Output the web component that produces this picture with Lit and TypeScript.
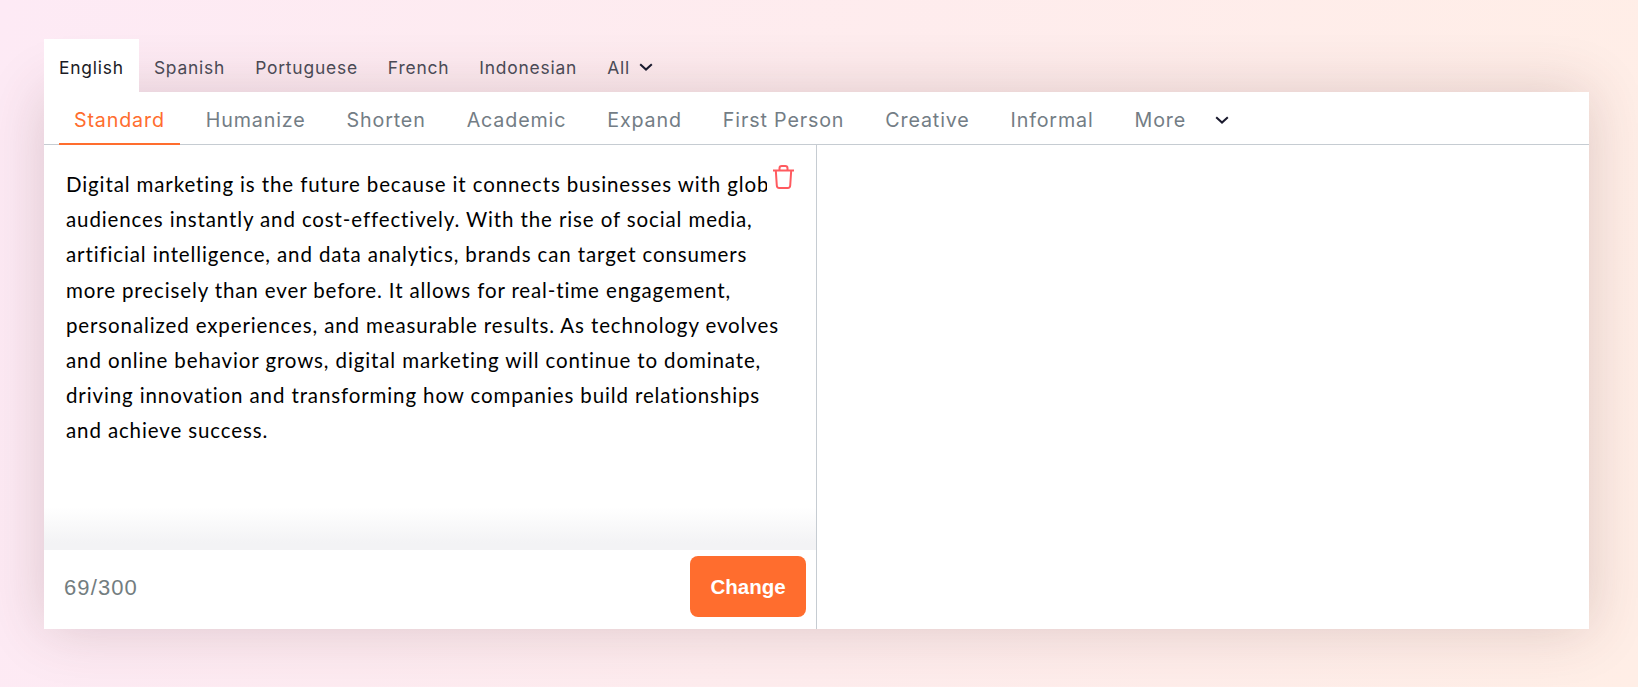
import { LitElement, html, css } from "lit";
import { customElement } from "lit/decorators.js";

const langs = ["Spanish", "Portuguese", "French", "Indonesian"];
const modes = ["Humanize", "Shorten", "Academic", "Expand", "First Person", "Creative", "Informal"];
const text = "Digital marketing is the future because it connects businesses with global audiences instantly and cost-effectively. With the rise of social media, artificial intelligence, and data analytics, brands can target consumers more precisely than ever before. It allows for real-time engagement, personalized experiences, and measurable results. As technology evolves and online behavior grows, digital marketing will continue to dominate, driving innovation and transforming how companies build relationships and achieve success.";

const chevron = html`<svg class="chev" viewBox="0 0 14 8" width="14" height="8"><path d="M1.2 1.2 7 6.6l5.8-5.4" fill="none" stroke="#1a1a2e" stroke-width="2"/></svg>`;

@customElement("app-root")
export class AppRoot extends LitElement {
  static styles = css`
    :host { display: block; width: 1638px; height: 687px; overflow: hidden;
      background: linear-gradient(100deg, #fdeaf5 0%, #ffeee6 100%); box-sizing: border-box; padding: 39px 49px 0 44px; font-family: Inter, sans-serif; }
    .langs { position: relative; z-index: 1; display: flex; height: 53px; align-items: stretch; font-size: 17.4px; letter-spacing: 0.8px; color: #4a4a55; }
    .lang { padding: 3px 15px 0; display: flex; align-items: center; }
    .lang.active { background: #fff; color: #1b1b25; }
    .lang .chev { margin-left: 9px; }
    .card { background: #fff; height: 537px; display: flex; flex-direction: column; box-shadow: 0 0 55px rgba(90, 50, 50, 0.2); }
    .modes { display: flex; height: 52px; border-bottom: 1px solid #c6ccd2; padding-left: 15px; font-size: 19.7px; letter-spacing: 0.84px; color: #737d85; box-sizing: content-box; }
    .mode { padding: 5px 15px 0; margin-right: 11px; display: flex; align-items: center; margin-bottom: -1px; border-bottom: 2px solid transparent; box-sizing: border-box; height: 53px; }
    .mode.active { color: #ff6d2e; border-bottom-color: #ff6d2e; }
    .mode.more { margin-right: 0; }
    .mode .chev { margin-left: 29px; }
    .panes { flex: 1; display: flex; min-height: 0; }
    .left { width: 772px; border-right: 1px solid #c6ccd2; display: flex; flex-direction: column; position: relative; }
    .editor { flex: 1; padding: 22px 29px 0 22px; overflow: hidden; font-family: Lato, sans-serif; font-size: 20.5px; line-height: 35.2px; letter-spacing: 0.88px; color: #000; background: linear-gradient(to bottom, #fff 0, #fff 362px, #f3f3f5 398px); }
    .trash { position: absolute; top: 19px; left: 723px; width: 30px; height: 32px; background: #fff; padding: 1px 0 0 6px; box-sizing: border-box; }
    .trash svg { display: block; }
    .foot { height: 79px; display: flex; align-items: center; justify-content: space-between; padding: 0 10px 0 20px; box-sizing: border-box; }
    .count { font-family: "Liberation Sans", sans-serif; font-size: 22px; letter-spacing: 1.1px; color: #737d80; padding-bottom: 4px; }
    .btn { width: 116px; height: 61px; margin-bottom: 6px; border: 0; border-radius: 8px; background: #ff6d2e; color: #fff; font-family: "Liberation Sans", sans-serif; font-weight: 700; font-size: 20.5px; }
    .right { flex: 1; }
  `;

  render() {
    return html`
      <div class="langs">
        <div class="lang active">English</div>
        ${langs.map((l) => html`<div class="lang">${l}</div>`)}
        <div class="lang">All${chevron}</div>
      </div>
      <div class="card">
        <div class="modes">
          <div class="mode active">Standard</div>
          ${modes.map((m) => html`<div class="mode">${m}</div>`)}
          <div class="mode more">More${chevron}</div>
        </div>
        <div class="panes">
          <div class="left">
            <div class="editor">${text}</div>
            <div class="trash">
              <svg viewBox="0 0 21 24" width="21" height="24" fill="none" stroke="#ff5a5f" stroke-width="2" stroke-linejoin="round">
                <path d="M0 5.5h21M6.5 5.5V3.2C6.5 1.8 7.4 1 8.8 1h3.4c1.4 0 2.3.8 2.3 2.2v2.3M2.8 5.5l1 15c.1 1.6 1 2.5 2.4 2.5h8.6c1.4 0 2.3-.9 2.4-2.5l1-15"/>
              </svg>
            </div>
            <div class="foot">
              <div class="count">69/300</div>
              <button class="btn">Change</button>
            </div>
          </div>
          <div class="right"></div>
        </div>
      </div>`;
  }
}
